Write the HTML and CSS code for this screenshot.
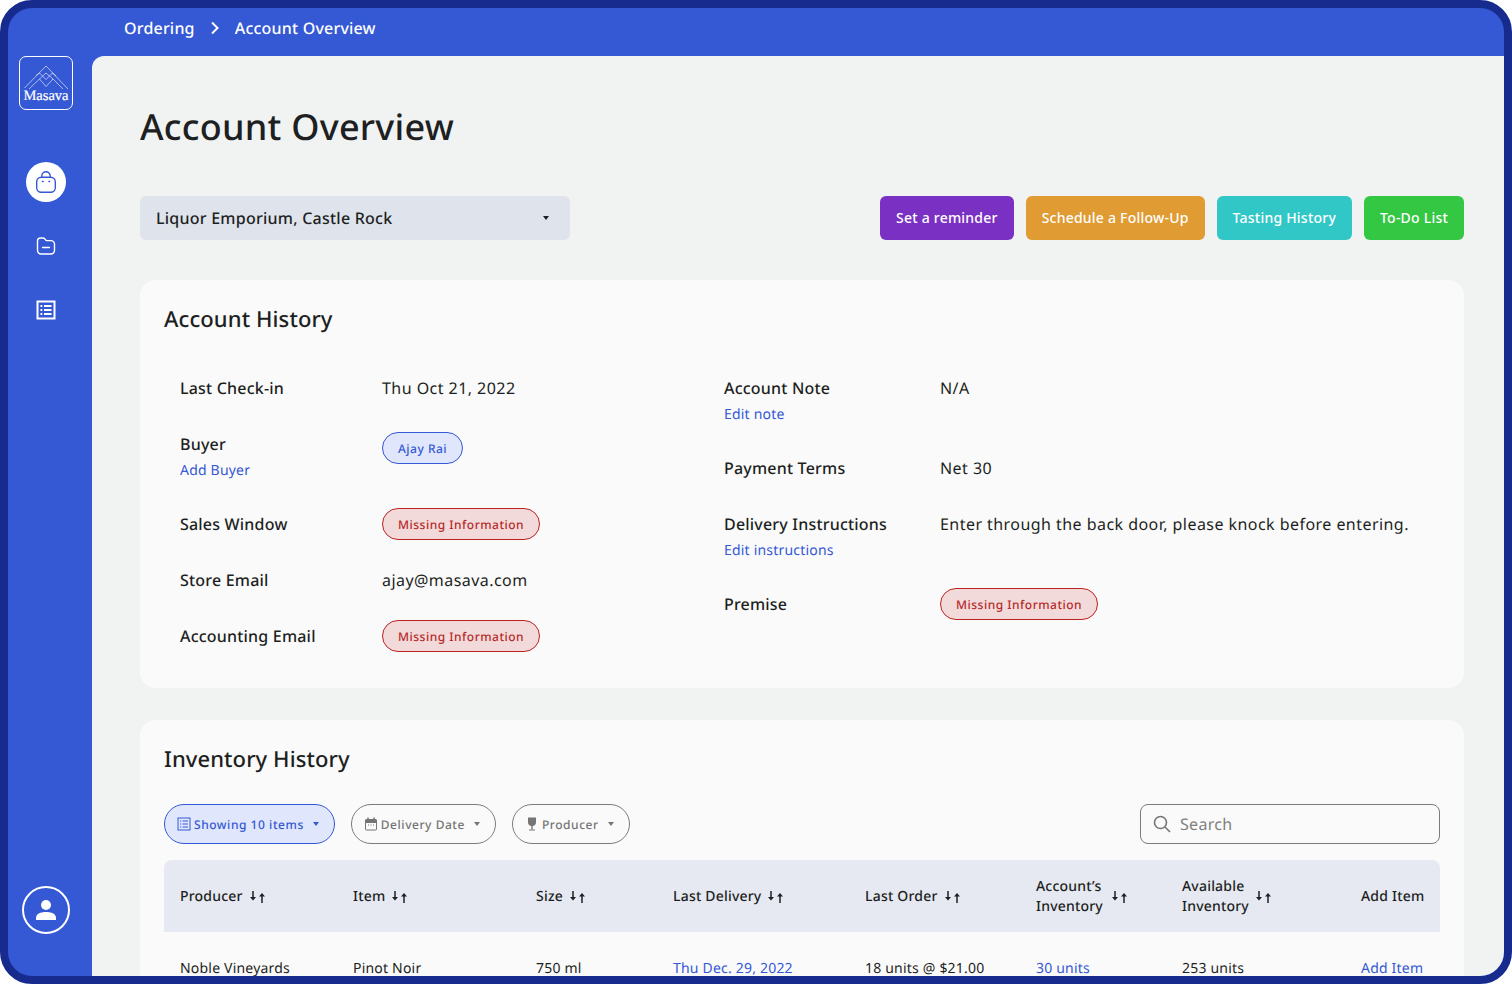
FILE: index.html
```html
<!DOCTYPE html>
<html lang="en">
<head>
    <meta charset="UTF-8">
    <title>Account Overview</title>
    <link rel="stylesheet" href="styles.css">
</head>
<body>
<div class="frame">
    <header class="topbar">
        <span>Ordering</span>
        <svg class="crumb-sep" width="10" height="14" viewBox="0 0 10 14"><path d="M2 1.500 7.500 7 2 12.500" fill="none" stroke="#fff" stroke-width="2"/></svg>
        <span>Account Overview</span>
    </header>

    <aside class="sidebar">
        <div class="logo">
            <svg width="44" height="24" viewBox="0 0 44 24" fill="none" stroke="#fff" stroke-width="0.6">
                <path d="M.5 22 22 0 44 23"/>
                <path d="M5 23 15.500 13 22 20.500 29 13 39 23"/>
                <path d="M15.500 13 22 7 29 13"/>
                <path d="M12 9.500 15.500 7 22 13.500 28.500 7 32 10"/>
            </svg>
            <span class="logo-text">Masava</span>
        </div>
        <a class="nav-item active">
            <svg width="22" height="22" viewBox="0 0 22 22" fill="none" stroke="#3558d4" stroke-width="1.400">
                <rect x="1.700" y="6.200" width="18.600" height="15" rx="4.500"/>
                <path d="M6.800 6.200V5a4.200 4.200 0 0 1 8.400 0v1.200"/>
                <path d="M7.500 10.500h.6M14 10.500h.6" stroke-linecap="round" stroke-width="1.600"/>
            </svg>
        </a>
        <a class="nav-item">
            <svg width="20" height="20" viewBox="0 0 20 20" fill="none" stroke="#fff" stroke-width="1.400">
                <path d="M1.500 5a3 3 0 0 1 3-3h2.600c.8 0 1.300.4 1.800 1l1.400 1.600h4.700a3.500 3.500 0 0 1 3.500 3.500v6.400a3.500 3.500 0 0 1-3.500 3.500H5a3.500 3.500 0 0 1-3.500-3.500Z"/>
                <path d="M6.500 11.500h7" stroke-linecap="round"/>
            </svg>
        </a>
        <a class="nav-item">
            <svg width="20" height="20" viewBox="0 0 20 20" fill="none" stroke="#fff" stroke-width="2">
                <rect x="1.500" y="1.500" width="17" height="17"/>
                <path d="M8 6h7.500M8 10h7.500M8 14h7.500M4.500 6h1.800M4.500 10h1.800M4.500 14h1.800"/>
            </svg>
        </a>
        <div class="user-btn">
            <svg width="24" height="24" viewBox="0 0 24 24" fill="#fff">
                <circle cx="12" cy="7" r="5"/>
                <path d="M2 22v-2c0-4 4-6 10-6s10 2 10 6v2Z"/>
            </svg>
        </div>
    </aside>

    <main class="content">
        <h1>Account Overview</h1>

        <div class="toolbar">
            <div class="account-select">
                <span>Liquor Emporium, Castle Rock</span>
                <span class="caret dark"></span>
            </div>
            <div class="actions">
                <button class="btn purple">Set a reminder</button>
                <button class="btn orange">Schedule a Follow-Up</button>
                <button class="btn teal">Tasting History</button>
                <button class="btn green">To-Do List</button>
            </div>
        </div>

        <section class="card">
            <h2>Account History</h2>
            <div class="details">
                <div class="col col-left">
                    <div class="row">
                        <div class="label">Last Check-in</div>
                        <div class="value">Thu Oct 21, 2022</div>
                    </div>
                    <div class="row stacked">
                        <div>
                            <div class="label">Buyer</div>
                            <a class="link">Add Buyer</a>
                        </div>
                        <div><span class="pill blue">Ajay Rai</span></div>
                    </div>
                    <div class="row">
                        <div class="label">Sales Window</div>
                        <div><span class="pill red">Missing Information</span></div>
                    </div>
                    <div class="row">
                        <div class="label">Store Email</div>
                        <div class="value">ajay@masava.com</div>
                    </div>
                    <div class="row">
                        <div class="label">Accounting Email</div>
                        <div><span class="pill red">Missing Information</span></div>
                    </div>
                </div>
                <div class="col col-right">
                    <div class="row stacked">
                        <div>
                            <div class="label">Account Note</div>
                            <a class="link">Edit note</a>
                        </div>
                        <div class="value">N/A</div>
                    </div>
                    <div class="row">
                        <div class="label">Payment Terms</div>
                        <div class="value">Net 30</div>
                    </div>
                    <div class="row stacked">
                        <div>
                            <div class="label">Delivery Instructions</div>
                            <a class="link">Edit instructions</a>
                        </div>
                        <div class="value">Enter through the back door, please knock before entering.</div>
                    </div>
                    <div class="row">
                        <div class="label">Premise</div>
                        <div><span class="pill red">Missing Information</span></div>
                    </div>
                </div>
            </div>
        </section>

        <section class="card">
            <h2>Inventory History</h2>
            <div class="filters">
                <div class="filter selected">
                    <svg width="14" height="14" viewBox="0 0 14 14" fill="none" stroke="#3558d4">
                        <rect x="1" y="1" width="12" height="12"/>
                        <path d="M5.500 4h5.500M5.500 7h5.500M5.500 10h5.500M3 4h1.200M3 7h1.200M3 10h1.200"/>
                    </svg>
                    <span>Showing 10 items</span>
                    <span class="caret"></span>
                </div>
                <div class="filter">
                    <svg width="14" height="14" viewBox="0 0 14 14" fill="none" stroke="#757575">
                        <rect x="1.500" y="2.500" width="11" height="10.500" rx="1"/>
                        <path d="M1.500 3h11v2.500h-11Z" fill="#757575"/>
                        <path d="M4 .5v2M10 .5v2" stroke-width="1.500"/>
                        <path d="M4 8h1M6.500 8h1M9 8h1"/>
                    </svg>
                    <span>Delivery Date</span>
                    <span class="caret"></span>
                </div>
                <div class="filter">
                    <svg width="14" height="14" viewBox="0 0 14 14" fill="#757575">
                        <path d="M3 .5h8v4.500a4 4 0 0 1-8 0Z"/>
                        <path d="M6.300 8h1.400v4.500h-1.400Z"/>
                        <path d="M4 12.500h6v1H4Z"/>
                    </svg>
                    <span>Producer</span>
                    <span class="caret"></span>
                </div>
                <div class="search">
                    <svg width="18" height="18" viewBox="0 0 18 18" fill="none" stroke="#757575" stroke-width="1.600">
                        <circle cx="7.500" cy="7.500" r="6"/>
                        <path d="m12 12 5 5"/>
                    </svg>
                    <span>Search</span>
                </div>
            </div>

            <table class="inventory">
                <colgroup>
                    <col class="c1"><col class="c2"><col class="c3"><col class="c4">
                    <col class="c5"><col class="c6"><col class="c7"><col class="c8">
                </colgroup>
                <thead>
                    <tr>
                        <th><div class="th-in">Producer <svg class="sort" viewBox="0 0 16 12"><use href="#sort"/></svg></div></th>
                        <th><div class="th-in">Item <svg class="sort" viewBox="0 0 16 12"><use href="#sort"/></svg></div></th>
                        <th><div class="th-in">Size <svg class="sort" viewBox="0 0 16 12"><use href="#sort"/></svg></div></th>
                        <th><div class="th-in">Last Delivery <svg class="sort" viewBox="0 0 16 12"><use href="#sort"/></svg></div></th>
                        <th><div class="th-in">Last Order <svg class="sort" viewBox="0 0 16 12"><use href="#sort"/></svg></div></th>
                        <th><div class="th-in th-wide"><span>Account’s<br>Inventory</span> <svg class="sort" viewBox="0 0 16 12"><use href="#sort"/></svg></div></th>
                        <th><div class="th-in"><span>Available<br>Inventory</span> <svg class="sort" viewBox="0 0 16 12"><use href="#sort"/></svg></div></th>
                        <th>Add Item</th>
                    </tr>
                </thead>
                <tbody>
                    <tr>
                        <td>Noble Vineyards</td>
                        <td>Pinot Noir</td>
                        <td>750 ml</td>
                        <td><a class="link">Thu Dec. 29, 2022</a></td>
                        <td>18 units @ $21.00</td>
                        <td><a class="link">30 units</a></td>
                        <td>253 units</td>
                        <td><a class="link">Add Item</a></td>
                    </tr>
                </tbody>
            </table>
        </section>
    </main>
</div>

<svg width="0" height="0" class="defs">
    <symbol id="sort" viewBox="0 0 16 12">
        <path d="M3 0v7" stroke="#1d1f22" stroke-width="1.500"/>
        <path d="M0 6h6L3 9.500Z" fill="#1d1f22"/>
        <path d="M12 12V4" stroke="#1d1f22" stroke-width="1.500"/>
        <path d="M9 5.500h6L12 2Z" fill="#1d1f22"/>
    </symbol>
</svg>
</body>
</html>
```

FILE: styles.css
```css
* {
    box-sizing: border-box;
}

body {
    margin: 0;
    height: 984px;
    overflow: hidden;
    background: #fff;
    font-family: "Noto Sans", sans-serif;
    color: #1d1f22;
    text-rendering: geometricPrecision;
}

.frame {
    display: grid;
    grid-template-columns: 84px 1fr;
    grid-template-rows: 48px 1fr;
    height: 984px;
    border: 8px solid #172a8e;
    border-radius: 32px;
    background: #3558d4;
    overflow: hidden;
}

.defs {
    position: absolute;
}

/* top bar */
.topbar {
    grid-column: 1 / 3;
    display: flex;
    align-items: center;
    gap: 15px;
    padding: 0 0 8px 116px;
    color: #fff;
    font-size: 16px;
    font-weight: 500;
    letter-spacing: 0.2px;
}

/* sidebar */
.sidebar {
    display: flex;
    flex-direction: column;
    align-items: center;
    padding: 0 8px 42px 0;
}

.logo {
    display: flex;
    flex-direction: column;
    align-items: center;
    width: 54px;
    height: 54px;
    padding-top: 9px;
    border: 1px solid #fff;
    border-radius: 7px;
    margin-bottom: 32px;
}

.logo-text {
    font-family: "Liberation Serif", serif;
    font-size: 14.5px;
    line-height: 12px;
    color: #fff;
    -webkit-text-stroke: 0.2px #fff;
}

.nav-item {
    display: flex;
    align-items: center;
    justify-content: center;
    width: 40px;
    height: 40px;
    margin-top: 20px;
    margin-bottom: 4px;
}

.nav-item.active {
    background: #fff;
    border-radius: 50%;
}

.user-btn {
    display: flex;
    align-items: center;
    justify-content: center;
    width: 48px;
    height: 48px;
    margin-top: auto;
    border: 2px solid #fff;
    border-radius: 50%;
}

/* main */
.content {
    background: #f1f3f3;
    border-top-left-radius: 12px;
    padding: 0 40px 0 48px;
    overflow: hidden;
}

h1 {
    margin: 48px 0 0;
    font-size: 36px;
    line-height: 46px;
    font-weight: 500;
    letter-spacing: 0.25px;
}

.toolbar {
    display: flex;
    justify-content: space-between;
    margin-top: 46px;
}

.account-select {
    display: flex;
    align-items: center;
    justify-content: space-between;
    width: 430px;
    height: 44px;
    padding: 0 20px 0 16px;
    background: #dfe3ec;
    border-radius: 6px;
    font-size: 16px;
    font-weight: 500;
    letter-spacing: 0.24px;
}

.caret {
    width: 0;
    height: 0;
    border-left: 3.5px solid transparent;
    border-right: 3.5px solid transparent;
    border-top: 4px solid currentColor;
}

.caret.dark {
    color: #1d1f22;
    margin-right: 1px;
}

.actions {
    display: flex;
    gap: 12px;
}

.btn {
    height: 44px;
    padding: 0 16px 2px;
    border: none;
    border-radius: 6px;
    color: #fff;
    font-family: inherit;
    font-size: 14px;
    font-weight: 500;
    letter-spacing: 0.22px;
}

.purple { background: #7b30c4; }
.orange { background: #e09b33; }
.teal { background: #31c7c7; }
.green { background: #33c743; }

.card {
    margin-top: 40px;
    padding: 24px;
    background: #fafafa;
    border-radius: 16px;
}

.card + .card {
    margin-top: 32px;
}

h2 {
    margin: 0;
    font-size: 22px;
    line-height: 30px;
    font-weight: 500;
    letter-spacing: 0.1px;
}

.details {
    display: flex;
    margin-top: 38px;
    padding: 0 0 12px 16px;
}

.col {
    display: flex;
    flex-direction: column;
    gap: 24px;
}

.col-left {
    width: 544px;
}

.row {
    display: grid;
    align-items: center;
    min-height: 32px;
}

.col-left .row {
    grid-template-columns: 202px 1fr;
}

.col-right .row {
    grid-template-columns: 216px 1fr;
}

.row.stacked {
    align-items: start;
    padding: 4px 0 1px;
}

.label {
    font-size: 16px;
    line-height: 24px;
    font-weight: 500;
    letter-spacing: 0.2px;
}

.value {
    font-size: 16px;
    line-height: 24px;
    letter-spacing: 0.45px;
}

.link {
    color: #3558d4;
    font-size: 14px;
    line-height: 24px;
    letter-spacing: 0.2px;
}

.row .link {
    display: block;
    margin-top: 3px;
}

.pill {
    display: inline-block;
    height: 32px;
    padding: 0 15px;
    border: 1px solid;
    border-radius: 16px;
    font-size: 12px;
    line-height: 31px;
    font-weight: 500;
    letter-spacing: 0.5px;
}

.pill.blue {
    background: #e0e6fb;
    border-color: #3558d4;
    color: #3558d4;
}

.pill.red {
    background: #f3dada;
    border-color: #bb2222;
    color: #b52a2a;
}

.filters {
    display: flex;
    gap: 16px;
    margin-top: 30px;
}

.filter {
    display: flex;
    align-items: center;
    height: 40px;
    padding: 0 15px 0 12px;
    gap: 3px;
    border: 1px solid #7c7c7c;
    border-radius: 20px;
    color: #757575;
    font-size: 12px;
    font-weight: 500;
    letter-spacing: 0.55px;
}

.filter .caret {
    margin-left: 6px;
}

.filter.selected {
    background: #e0e6fb;
    border-color: #3558d4;
    color: #3558d4;
}

.search {
    display: flex;
    align-items: center;
    gap: 9px;
    width: 300px;
    height: 40px;
    margin-left: auto;
    padding: 0 12px;
    border: 1px solid #7c7c7c;
    border-radius: 8px;
    color: #808080;
    font-size: 16px;
    letter-spacing: 0.3px;
}

.inventory {
    width: 1276px;
    margin-top: 16px;
    border-collapse: collapse;
    table-layout: fixed;
    font-size: 14px;
    letter-spacing: 0.2px;
}

.c1 { width: 173px; }
.c2 { width: 183px; }
.c3 { width: 137px; }
.c4 { width: 192px; }
.c5 { width: 171px; }
.c6 { width: 146px; }
.c7 { width: 179px; }
.c8 { width: 95px; }

.inventory thead tr {
    height: 72px;
    background: #e6e9f2;
}

.inventory th {
    padding: 2px 0 0 16px;
    text-align: left;
    font-weight: 500;
    line-height: 20px;
}

.inventory th:first-child {
    border-top-left-radius: 8px;
}

.inventory th:last-child {
    border-top-right-radius: 8px;
}

.th-in {
    display: flex;
    align-items: center;
    gap: 7px;
}

.th-wide {
    gap: 9px;
}

.sort {
    width: 16px;
    height: 12px;
}

.inventory td {
    padding: 25px 0 0 16px;
    line-height: 20px;
    white-space: nowrap;
}
```
